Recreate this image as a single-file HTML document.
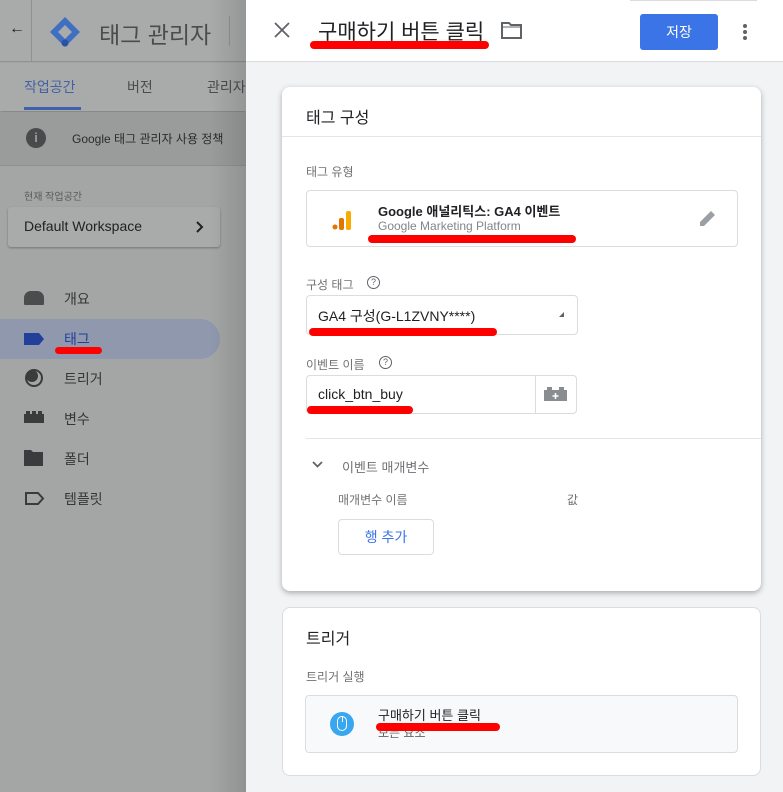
<!DOCTYPE html>
<html><head><meta charset="utf-8"><style>
*{box-sizing:border-box;margin:0;padding:0}
body{width:783px;height:792px;overflow:hidden;position:relative;font-family:"Liberation Sans","Noto Sans CJK KR",sans-serif;background:#a4a6a5}
.abs{position:absolute}
.red{position:absolute;height:6px;background:#f00;border-radius:3px}
.card{position:absolute;background:#fff;border-radius:8px}
.lbl{position:absolute;font-size:12px;color:#6f7174}
.box{position:absolute;border:1px solid #dadce0;border-radius:4px;background:#fff}
</style></head><body>
<div class="abs" style="left:0;top:0;width:246px;height:62px;background:#a9abab;border-bottom:1px solid #8f9192"></div>
<div class="abs" style="left:31px;top:0;width:1px;height:62px;background:#8f9192"></div>
<div class="abs" style="left:9px;top:20px;font-size:16px;color:#222">←</div>
<svg class="abs" style="left:48px;top:15px" width="34" height="34" viewBox="0 0 34 34"><path d="M17 2L32 17L17 32L2 17Z" fill="#3e6fc0"/><path d="M17 10L24 17L17 24L10 17Z" fill="#a9abab"/><circle cx="17" cy="28" r="3.5" fill="#2b52a0"/></svg>
<div class="abs" style="left:99px;top:16px;font-size:23px;color:#4a4c4e">태그 관리자</div>
<div class="abs" style="left:229px;top:16px;width:1px;height:30px;background:#8f9192"></div>
<div class="abs" style="left:0;top:63px;width:246px;height:48px;background:#a9abab;box-shadow:0 2px 3px rgba(0,0,0,.2)"></div>
<div class="abs" style="left:24px;top:77px;font-size:14px;color:#4562a0">작업공간</div>
<div class="abs" style="left:24px;top:107px;width:57px;height:3px;background:#3e63ad"></div>
<div class="abs" style="left:127px;top:77px;font-size:14px;color:#4a4c4e">버전</div>
<div class="abs" style="left:207px;top:77px;font-size:14px;color:#4a4c4e">관리자</div>
<div class="abs" style="left:0;top:112px;width:246px;height:54px;background:#9a9c9c;border-bottom:1px solid #909292"></div>
<div class="abs" style="left:26px;top:128px;width:20px;height:20px;border-radius:50%;background:#484a4b;color:#9a9c9c;font-size:13px;font-weight:bold;text-align:center;line-height:20px">i</div>
<div class="abs" style="left:72px;top:130px;font-size:12px;color:#2a2b2d;white-space:nowrap">Google 태그 관리자 사용 정책</div>
<div class="abs" style="left:24px;top:188px;font-size:10px;color:#595b5c">현재 작업공간</div>
<div class="abs" style="left:8px;top:207px;width:212px;height:40px;background:#a9abab;border-radius:3px;box-shadow:0 1px 2px rgba(0,0,0,.3)"></div>
<div class="abs" style="left:24px;top:218px;font-size:14px;color:#202122">Default Workspace</div>
<svg class="abs" style="left:195px;top:221px" width="9" height="12"><path d="M2 1L7 6L2 11" fill="none" stroke="#202122" stroke-width="2"/></svg>
<div class="abs" style="left:0;top:319px;width:220px;height:40px;background:#8f98ad;border-radius:0 20px 20px 0"></div>
<div class="abs" style="left:24px;top:291px;width:20px;height:14px;background:#4a4c4d;border-radius:7px 7px 1px 1px"></div>
<div class="abs" style="left:64px;top:289px;font-size:14px;color:#353637">개요</div>
<svg class="abs" style="left:24px;top:333px" width="20" height="12"><path d="M0 0H15L20 6L15 12H0Z" fill="#22409a"/></svg>
<div class="abs" style="left:64px;top:329px;font-size:14px;color:#22409a">태그</div>
<div class="red" style="left:55px;top:347px;width:47px;height:7px;border-radius:4px"></div>
<svg class="abs" style="left:24px;top:368px" width="20" height="20"><circle cx="10" cy="10" r="8" fill="none" stroke="#3a3b3c" stroke-width="2"/><circle cx="8" cy="8" r="6" fill="#3a3b3c"/></svg>
<div class="abs" style="left:64px;top:369px;font-size:14px;color:#353637">트리거</div>
<svg class="abs" style="left:24px;top:411px" width="20" height="12"><path d="M0 3H2V0H6V3H8V0H12V3H14V0H18V3H20V12H0Z" fill="#3a3b3c"/></svg>
<div class="abs" style="left:64px;top:409px;font-size:14px;color:#353637">변수</div>
<svg class="abs" style="left:24px;top:450px" width="20" height="16"><path d="M0 0H7L9 2H19V16H0Z" fill="#3a3b3c"/></svg>
<div class="abs" style="left:64px;top:449px;font-size:14px;color:#353637">폴더</div>
<svg class="abs" style="left:25px;top:492px" width="20" height="13"><path d="M1 1H13L18 6.5L13 12H1Z" fill="none" stroke="#3a3b3c" stroke-width="2"/></svg>
<div class="abs" style="left:64px;top:489px;font-size:14px;color:#353637">템플릿</div>
<div class="abs" style="left:210px;top:0;width:36px;height:792px;background:linear-gradient(90deg,rgba(0,0,0,0),rgba(0,0,0,.12))"></div>

<div class="abs" style="left:246px;top:0;width:537px;height:792px;background:#f1f3f4"></div>
<div class="abs" style="left:246px;top:0;width:537px;height:62px;background:#fff;border-bottom:1px solid #dadce0"></div>
<div class="abs" style="left:630px;top:0;width:127px;height:1px;background:#dadce0"></div>
<svg class="abs" style="left:274px;top:22px" width="16" height="16"><path d="M1 1L15 15M15 1L1 15" stroke="#5f6368" stroke-width="1.8"/></svg>
<div class="abs" style="left:318px;top:16px;font-size:21px;color:#202124">구매하기 버튼 클릭</div>
<div class="red" style="left:310px;top:41px;width:179px;height:8px;border-radius:4px"></div>
<svg class="abs" style="left:501px;top:21px" width="21" height="18"><path d="M1 2H8L10 4H20V17H1Z" fill="none" stroke="#5f6368" stroke-width="2"/><path d="M1 6H20" stroke="#5f6368" stroke-width="1"/></svg>
<div class="abs" style="left:640px;top:14px;width:78px;height:36px;background:#3b74e6;border-radius:3px;color:#fff;font-size:14px;text-align:center;line-height:36px">저장</div>
<div class="abs" style="left:743px;top:24px;width:4px;height:4px;border-radius:2px;background:#5f6368;box-shadow:0 6px 0 #5f6368,0 12px 0 #5f6368"></div>

<div class="card" style="left:282px;top:87px;width:479px;height:504px;box-shadow:0 2px 6px rgba(0,0,0,.3)"></div>
<div class="abs" style="left:306px;top:104px;font-size:16px;color:#202124">태그 구성</div>
<div class="abs" style="left:282px;top:136px;width:479px;height:1px;background:#e4e5e6"></div>
<div class="lbl" style="left:306px;top:163px">태그 유형</div>
<div class="box" style="left:306px;top:190px;width:432px;height:57px"></div>
<svg class="abs" style="left:332px;top:208px" width="20" height="24"><circle cx="3" cy="19" r="2.5" fill="#e37400"/><rect x="7" y="10" width="5" height="12" rx="2" fill="#e37400"/><rect x="14" y="3" width="5" height="19" rx="2" fill="#f9ab00"/></svg>
<div class="abs" style="left:378px;top:201px;font-size:13px;color:#202124;font-weight:bold">Google 애널리틱스: GA4 이벤트</div>
<div class="abs" style="left:378px;top:219px;font-size:12px;color:#80868b">Google Marketing Platform</div>
<div class="red" style="left:368px;top:235px;width:208px;height:8px;border-radius:4px"></div>
<svg class="abs" style="left:698px;top:208px" width="20" height="20"><path d="M2 18V14L13 3L17 7L6 18Z" fill="#9aa0a6"/></svg>
<div class="lbl" style="left:306px;top:276px">구성 태그</div>
<div class="abs" style="left:367px;top:276px;width:13px;height:13px;border:1.5px solid #5f6368;border-radius:50%;font-size:9px;color:#5f6368;text-align:center;line-height:10px">?</div>
<div class="box" style="left:306px;top:295px;width:272px;height:40px"></div>
<div class="abs" style="left:318px;top:306px;font-size:14px;color:#202124">GA4 구성(G-L1ZVNY****)</div>
<svg class="abs" style="left:559px;top:312px" width="5" height="5"><path d="M5 0V5H0Z" fill="#5f6368"/></svg>
<div class="red" style="left:309px;top:328px;width:188px;height:8px;border-radius:4px"></div>
<div class="lbl" style="left:306px;top:356px">이벤트 이름</div>
<div class="abs" style="left:379px;top:356px;width:13px;height:13px;border:1.5px solid #5f6368;border-radius:50%;font-size:9px;color:#5f6368;text-align:center;line-height:10px">?</div>
<div class="box" style="left:306px;top:375px;width:271px;height:39px"></div>
<div class="abs" style="left:535px;top:376px;width:1px;height:37px;background:#dadce0"></div>
<svg class="abs" style="left:544px;top:387px" width="23" height="14"><path d="M0 3H3V0H8V3H15V0H20V3H23V14H0Z" fill="#8a8d90"/><path d="M11.5 6V12M8.5 9H14.5" stroke="#fff" stroke-width="1.5"/></svg>
<div class="abs" style="left:318px;top:386px;font-size:14px;color:#202124">click_btn_buy</div>
<div class="red" style="left:307px;top:406px;width:106px;height:8px;border-radius:4px"></div>
<div class="abs" style="left:306px;top:438px;width:455px;height:1px;background:#e4e5e6"></div>
<svg class="abs" style="left:312px;top:461px" width="11" height="7"><path d="M1 1L5.5 5.5L10 1" fill="none" stroke="#5f6368" stroke-width="1.8"/></svg>
<div class="abs" style="left:342px;top:457px;font-size:13px;color:#6f7174">이벤트 매개변수</div>
<div class="abs" style="left:338px;top:491px;font-size:12px;color:#6f7174">매개변수 이름</div>
<div class="abs" style="left:567px;top:491px;font-size:12px;color:#6f7174">값</div>
<div class="abs" style="left:338px;top:519px;width:96px;height:36px;border:1px solid #dadce0;border-radius:4px;color:#3b74e6;font-size:14px;text-align:center;line-height:34px">행 추가</div>

<div class="card" style="left:282px;top:607px;width:479px;height:169px;border:1px solid #dadce0"></div>
<div class="abs" style="left:306px;top:625px;font-size:16px;color:#202124">트리거</div>
<div class="lbl" style="left:306px;top:668px">트리거 실행</div>
<div class="box" style="left:305px;top:695px;width:433px;height:58px;background:#f8f9fa"></div>
<div class="abs" style="left:330px;top:712px;width:24px;height:24px;border-radius:50%;background:#38a7f0"></div>
<div class="abs" style="left:337px;top:716px;width:10px;height:15px;border:1.5px solid #fff;border-radius:5px"></div>
<div class="abs" style="left:342px;top:717px;width:1px;height:5px;background:#fff"></div>
<div class="abs" style="left:378px;top:705px;font-size:13px;color:#202124">구매하기 버튼 클릭</div>
<div class="abs" style="left:378px;top:724px;font-size:12px;color:#5f6368">모든 요소</div>
<div class="red" style="left:376px;top:723px;width:124px;height:8px;border-radius:4px"></div>
</body></html>
